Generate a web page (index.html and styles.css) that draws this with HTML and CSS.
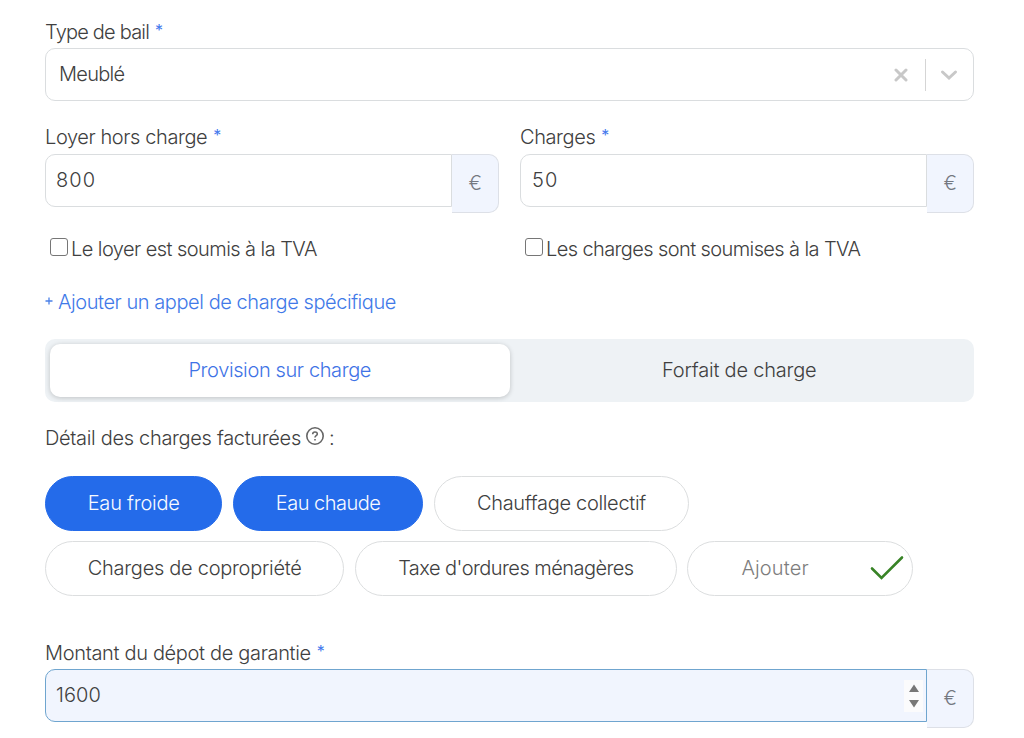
FILE: index.html
```
<!DOCTYPE html>
<html lang="fr">
<head>
<meta charset="utf-8">
<title>Bail</title>
<link rel="stylesheet" href="styles.css">
</head>
<body>
<form class="form">
  <div class="field">
    <div class="label"><span class="t-type">Type de bail</span><span class="star">*</span></div>
    <div class="select">
      <span class="select-value t-meuble">Meublé</span>
      <svg class="clear" width="14" height="14" viewBox="0 0 14 14"><path d="M2 2L12 12M12 2L2 12"/></svg>
      <span class="separator"></span>
      <svg class="chevron" width="18" height="12" viewBox="0 0 18 12"><path d="M2.500 3L9 9L15.500 3"/></svg>
    </div>
  </div>
  <div class="columns">
    <div class="column">
      <div class="label"><span class="t-loyer">Loyer hors charge</span><span class="star">*</span></div>
      <div class="group"><div class="input"><span class="t-800">800</span></div><div class="addon">€</div></div>
      <div class="check"><span class="box"></span><span class="t-tva1">Le loyer est soumis à la TVA</span></div>
    </div>
    <div class="column">
      <div class="label"><span class="t-charges">Charges</span><span class="star">*</span></div>
      <div class="group"><div class="input"><span class="t-50">50</span></div><div class="addon">€</div></div>
      <div class="check"><span class="box"></span><span class="t-tva2">Les charges sont soumises à la TVA</span></div>
    </div>
  </div>
  <div class="link"><svg class="plus" width="8" height="8" viewBox="0 0 8 8"><path d="M4 .5V7.500M.5 4H7.500"/></svg><span class="t-link">Ajouter un appel de charge spécifique</span></div>
  <div class="toggle">
    <div class="tab active"><span class="t-prov">Provision sur charge</span></div>
    <div class="tab"><span class="t-forf">Forfait de charge</span></div>
  </div>
  <div class="detail">
    <span class="t-detail">Détail des charges facturées</span>
    <svg class="help" width="20" height="20" viewBox="0 0 20 20"><circle cx="10" cy="10" r="8.200"/><path d="M7.700 8.200C7.700 5.200 12.300 5.300 12.300 8C12.300 9.700 10 9.700 10 11.500M10 13V14.500"/></svg>
    <span>:</span>
  </div>
  <div class="chips">
    <div class="chip on c-froide"><span class="t-froide">Eau froide</span></div>
    <div class="chip on c-chaude"><span class="t-chaude">Eau chaude</span></div>
    <div class="chip c-chauf"><span class="t-chauf">Chauffage collectif</span></div>
  </div>
  <div class="chips">
    <div class="chip c-copro"><span class="t-copro">Charges de copropriété</span></div>
    <div class="chip c-taxe"><span class="t-taxe">Taxe d'ordures ménagères</span></div>
    <div class="chip add"><span class="t-ajout">Ajouter</span><svg class="tick" width="34" height="26" viewBox="0 0 34 26"><path d="M2 13.500L11.500 23L32 2.500"/></svg></div>
  </div>
  <div class="deposit">
    <div class="label"><span class="t-depot">Montant du dépot de garantie</span><span class="star">*</span></div>
    <div class="group"><div class="input focused"><span class="t-1600">1600</span><span class="spinner"><svg width="12" height="26" viewBox="0 0 12 26"><path d="M6 1.500L11 9H1ZM6 24.500L1 17H11Z"/></svg></span></div><div class="addon">€</div></div>
  </div>
</form>
</body>
</html>
```
FILE: styles.css
```
* { box-sizing: border-box; }
body { margin: 0; background: #fff; color: #404040; font: 300 20px/32px Inter, "Liberation Sans", sans-serif; letter-spacing: -0.38px; white-space: nowrap; }
svg { fill: none; flex: none; }
.form { width: 929px; margin: 0 0 0 45px; padding-top: 16px; }
.label { display: flex; height: 32px; }
.star { color: #4479ed; font-size: 16px; font-weight: 400; margin-left: 6px; line-height: 29px; }
.select { display: flex; align-items: center; height: 53px; border: 1px solid #dadddf; border-radius: 10px; padding: 0 15px 0 13px; }
.select-value { flex: 1; padding-bottom: 1px; }
.clear { stroke: #c8c8c8; stroke-width: 3; stroke-linecap: round; margin-right: 17px; }
.separator { width: 1px; height: 32px; background: #d5d5d5; margin-right: 14px; }
.chevron { stroke: #c8c8c8; stroke-width: 3; stroke-linecap: round; }
.columns { display: flex; gap: 21px; margin-top: 20px; }
.column { width: 454px; }
.column .label { height: 33px; }
.deposit .label { height: 32px; }
.group { display: flex; align-items: flex-start; height: 59px; }
.input { display: flex; align-items: center; justify-content: space-between; flex: 1; height: 53px; border: 1px solid #dadddf; border-radius: 10px 0 0 10px; padding: 0 7px 2px 11px; }
.addon { width: 47px; height: 59px; border: 1px solid #dde0e7; border-left: 0; border-radius: 0 10px 10px 0; background: #f1f5fe; color: #747881; text-align: center; line-height: 56px; }
.check { display: flex; align-items: center; height: 32px; margin-top: 20px; padding-left: 5px; }
.box { width: 18px; height: 18px; border: 1px solid #767676; border-radius: 3px; margin: -4px 3px 0 0; }
.link { display: flex; margin-top: 20px; height: 32px; line-height: 34px; color: #4179e8; }
.plus { stroke: #4b80e8; stroke-width: 1.3; margin: 12px 5px 0 0; }
.toggle { display: flex; height: 63px; margin-top: 22px; padding: 5px; background: #eef2f5; border-radius: 10px; }
.tab { flex: 1; display: flex; justify-content: center; align-items: center; height: 53px; border-radius: 10px; padding-bottom: 1px; }
.active { background: #fff; color: #3f73e6; box-shadow: 0 1px 5px rgba(0, 0, 0, .2); }
.detail { display: flex; height: 32px; margin: 20px 0 22px; }
.help { margin: 4px 4px 0; stroke: #666; stroke-width: 1.6; }
.chips { display: flex; gap: 10.500px; height: 55px; margin-bottom: 10px; }
.chip { display: flex; align-items: center; justify-content: center; height: 55px; padding-bottom: 2px; border: 1px solid #dcdedf; border-radius: 28px; }
.on { background: #246bea; border-color: #246bea; color: #f8faff; }
.c-froide { width: 177.400px; }
.c-chaude { width: 190.500px; }
.c-chauf { width: 255px; }
.c-copro { width: 299.400px; }
.c-taxe { width: 322px; }
.add { width: 226px; color: #7d7d7d; justify-content: space-between; padding: 0 8px 2px 53px; }
.tick { stroke: #388326; stroke-width: 2.6; stroke-linecap: round; }
.deposit { margin-top: 41px; }
.focused { border-color: #6fa5cf; background: #f1f5fe; }
.spinner { display: flex; align-items: center; justify-content: center; width: 19px; height: 32px; background: #fbfbfc; margin: 2px -4px 0 0; }
.spinner svg { fill: #777; }
.t-type { letter-spacing: -.8px; }
.t-meuble { letter-spacing: -.7px; }
.t-loyer { letter-spacing: -.4px; }
.t-charges { letter-spacing: -.4px; }
.t-800, .t-50 { letter-spacing: 1.1px; margin-left: -1px; }
.t-50 { margin-left: 0; }
.t-1600 { letter-spacing: .1px; margin-left: -1px; }
.t-tva1 { letter-spacing: -.56px; }
.t-tva2 { letter-spacing: -.6px; }
.t-link { letter-spacing: -.44px; }
.t-prov { letter-spacing: -.38px; }
.t-forf { letter-spacing: -.2px; }
.t-detail { letter-spacing: -.32px; }
.t-depot { letter-spacing: -.33px; }
.t-chaude { letter-spacing: -.5px; }
.t-froide { letter-spacing: -.22px; }
.t-chauf { letter-spacing: -.32px; }
.t-copro { letter-spacing: -.28px; }
.t-taxe { letter-spacing: -.54px; }
.t-ajout { letter-spacing: .15px; }
```
